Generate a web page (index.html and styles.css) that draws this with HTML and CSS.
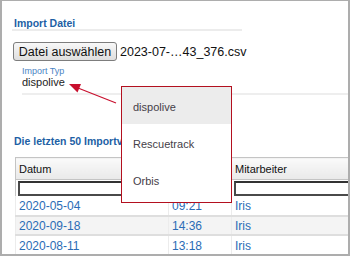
FILE: index.html
```html
<!DOCTYPE html>
<html lang="de">
<head>
    <meta charset="UTF-8">
    <title>Import</title>
    <link rel="stylesheet" href="styles.css">
</head>
<body>
<div class="frame">
    <h2 class="title">Import Datei</h2>

    <div class="file-row">
        <button class="file-btn" type="button">Datei auswählen</button>
        <span class="file-name">2023-07-…43_376.csv</span>
    </div>

    <div class="field">
        <div class="field-label">Import Typ</div>
        <div class="field-value">dispolive</div>
    </div>

    <h2 class="title title-list">Die letzten 50 Importvorgänge</h2>

    <table class="imports">
        <thead>
            <tr class="head">
                <th class="c-date">Datum</th>
                <th class="c-time">Zeit</th>
                <th class="c-user">Mitarbeiter</th>
            </tr>
            <tr class="filter">
                <td><input type="text"></td>
                <td><input type="text"></td>
                <td><input type="text"></td>
            </tr>
        </thead>
        <tbody>
            <tr><td>2020-05-04</td><td>09:21</td><td>Iris</td></tr>
            <tr class="odd"><td>2020-09-18</td><td>14:36</td><td>Iris</td></tr>
            <tr><td>2020-08-11</td><td>13:18</td><td>Iris</td></tr>
        </tbody>
    </table>

    <!-- callout arrow to the select -->
    <svg class="arrow" width="350" height="256" viewBox="0 0 350 256">
        <line x1="116" y1="103" x2="78" y2="88" stroke="#c8102e" stroke-width="1.2"/>
        <polygon points="69,84 81,84 77.5,92.5" fill="#c8102e"/>
    </svg>

    <ul class="menu">
        <li class="active">dispolive</li>
        <li>Rescuetrack</li>
        <li>Orbis</li>
    </ul>
</div>
</body>
</html>
```

FILE: styles.css
```css
*{
    margin: 0;
    padding: 0;
    box-sizing: border-box;
}
html,body{
    background: #fff;
    font-family: "Liberation Sans", Arial, sans-serif;
}
.frame{
    position: relative;
    width: 350px;
    height: 256px;
    border: 2px solid #adadad;
    border-top-width: 1px;
    overflow: hidden;
    padding: 16px 0 0 10px;
}
.title{
    font-size: 10.5px;
    font-weight: bold;
    line-height: 12px;
    color: #1d5fa5;
    width: 230px;
    padding: 0 0 0 2px;
    border-bottom: 2px solid #ececec;
}
.title-list{
    border-bottom: none;
    width: auto;
    margin-top: 40px;
}
.file-row{
    display: flex;
    align-items: center;
    gap: 3px;
    margin: 11px 0 0 1px;
}
.file-btn{
    font-family: inherit;
    font-size: 12.5px;
    color: #111;
    width: 104px;
    height: 19px;
    border: 1px solid #7d7d7d;
    border-radius: 3px;
    background: linear-gradient(#f8f8f8, #dedede);
}
.file-name{
    font-size: 12.5px;
    color: #111;
}
.field{
    margin: 5px 0 0 10px;
    padding-bottom: 4px;
    border-bottom: 2px solid #eeeeee;
}
.field-label{
    font-size: 9px;
    line-height: 10px;
    color: #4a84c4;
}
.field-value{
    font-size: 11px;
    line-height: 13px;
    color: #222;
}
.imports{
    margin: 10px 0 0 3px;
    width: 360px;
    border-collapse: collapse;
    font-size: 12px;
}
.imports th{
    font-weight: normal;
    font-size: 11px;
    text-align: left;
    color: #111;
    height: 22px;
    padding: 0 3px;
    background: linear-gradient(#fafafa, #e9e9e9);
    border: 1px solid #c4c4c4;
}
.c-date{ width: 153px; }
.c-time{ width: 63px; }
.filter td{
    padding: 1px 2px 0 2px;
    height: 16px;
    border-left: 1px solid #c4c4c4;
}
.filter input{
    display: block;
    width: 100%;
    height: 15px;
    border: 2px solid #4a4a4a;
    border-top-color: #333;
    background: #fff;
}
.imports tbody td{
    height: 19.5px;
    padding: 2px 3px 0 3px;
    color: #2a6cb6;
    border-bottom: 2px solid #dedede;
    border-left: 1px solid #ececec;
}
.imports tbody tr.odd td{
    background: #f4f4f4;
}
.arrow{
    position: absolute;
    left: -2px;
    top: -1px;
    pointer-events: none;
}
.menu{
    position: absolute;
    left: 119px;
    top: 85px;
    width: 111px;
    height: 117px;
    list-style: none;
    background: #fff;
    border: 1px solid #b3101f;
    padding-bottom: 5px;
}
.menu li{
    height: 37px;
    line-height: 40px;
    padding-left: 11px;
    font-size: 11px;
    color: #454048;
}
.menu li.active{
    background: #ececec;
}
```
